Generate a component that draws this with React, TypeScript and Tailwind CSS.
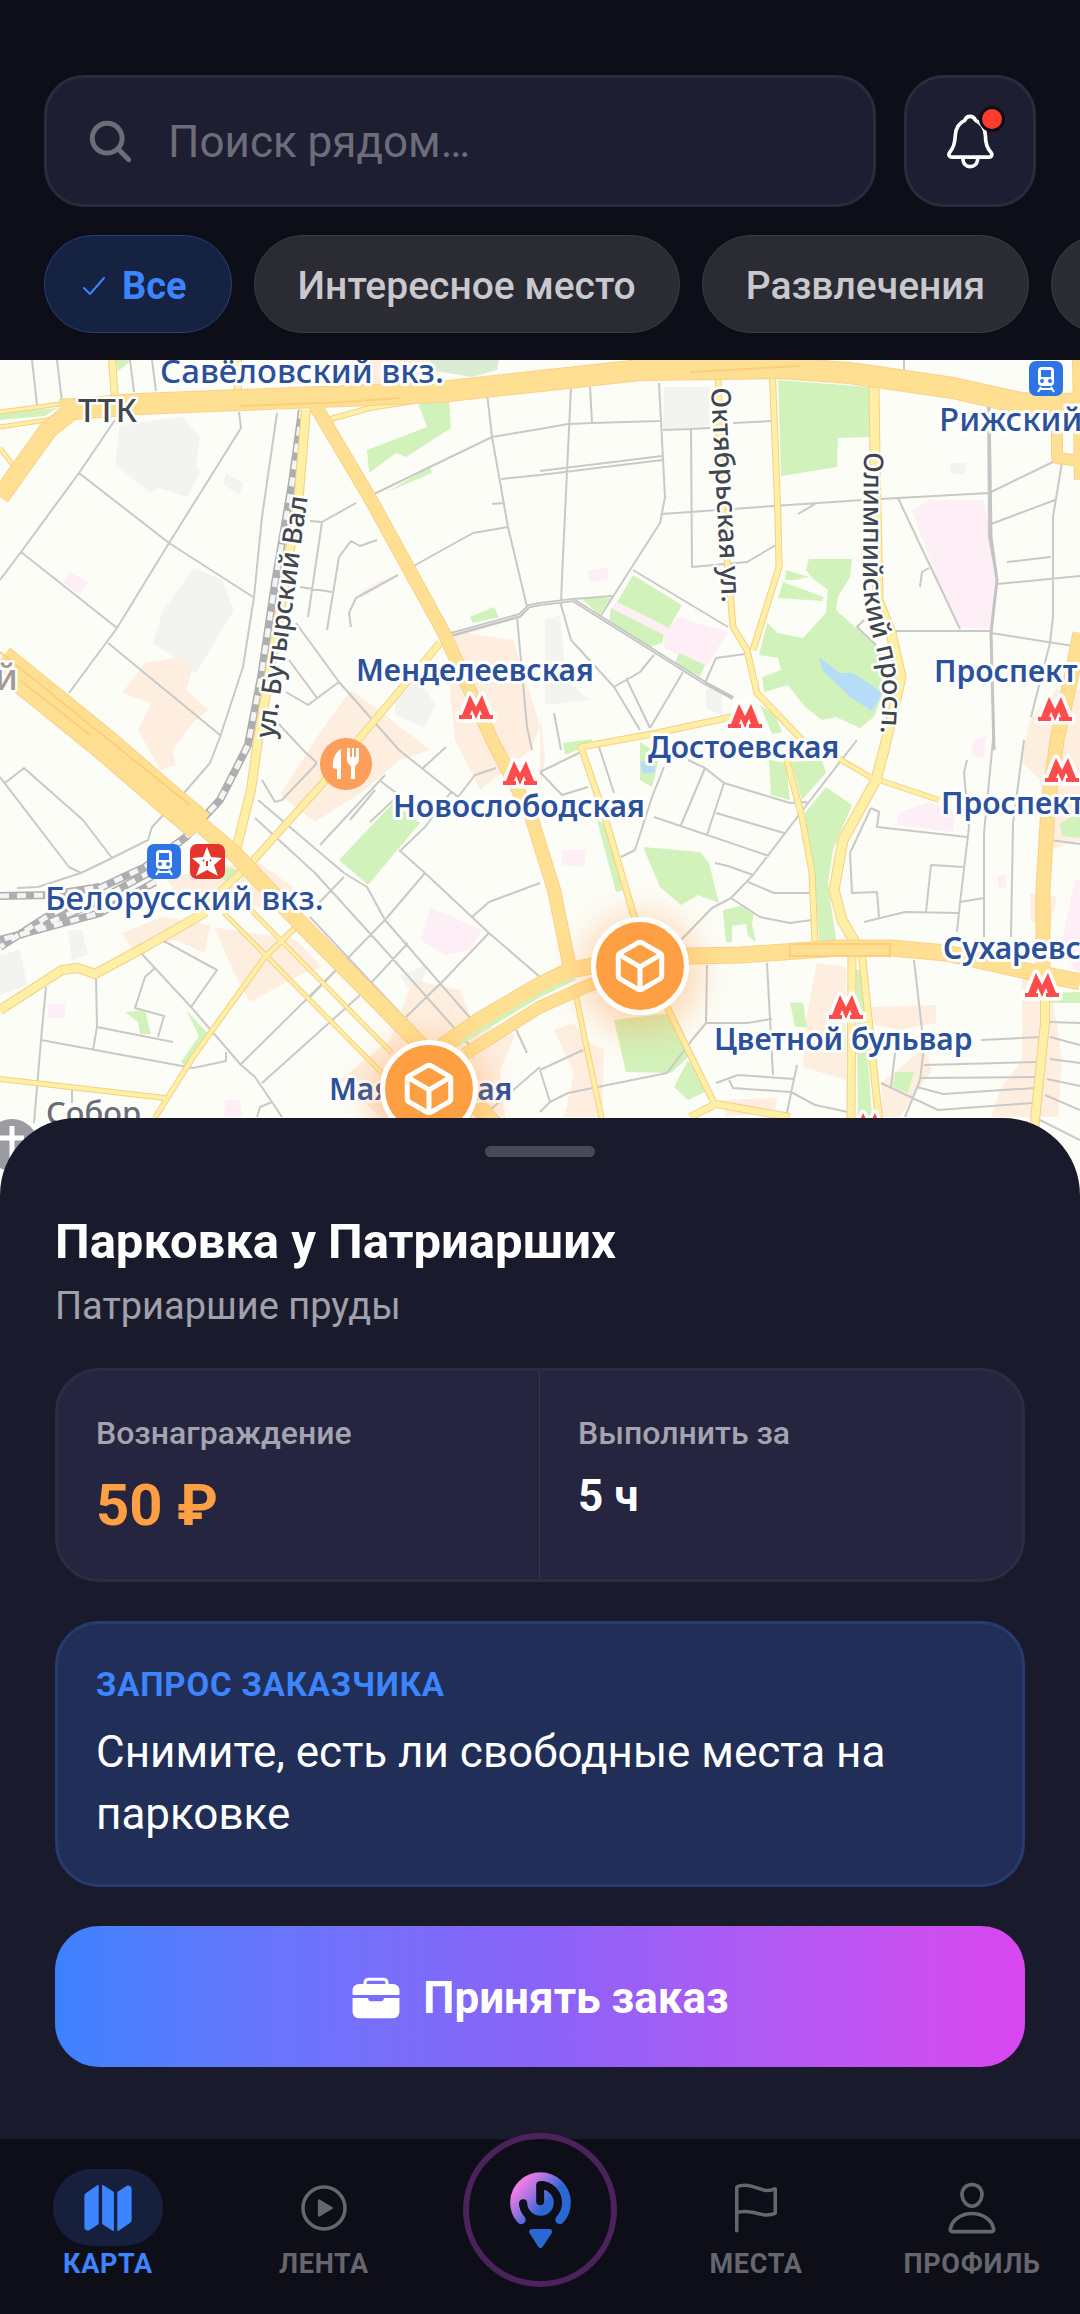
import {
  IoBriefcase,
  IoCheckmarkOutline,
  IoCubeOutline,
  IoFlagOutline,
  IoMap,
  IoPersonOutline,
  IoPlayCircleOutline,
  IoSearch,
} from "react-icons/io5";
import type { ReactNode } from "react";

const sideStreets = [
  "M32 360 37 405M57 360 62 402M130 360 134 392M152 360 156 391",
  "M115 420 79 473 21 552 0 580M79 473 169 543 253 597",
  "M239 412 241 428 169 543 117 628 69 693M21 552 117 628M108 643 220 735",
  "M277 413 262 517 254 597 243 667 220 737 210 763 184 793 152 827 148 840 112 858 81 873 38 887 17 888",
  "M487 393 492 437 508 527 527 607M540 429 492 437 372 495M356 503 322 522 308 617M310 521 322 522",
  "M377 540 360 546 351 541 339 557 327 630M300 587 332 592",
  "M508 527 473 533 410 568M398 575 356 598 349 613 351 627M540 475 501 479M492 504 503 503",
  "M448 637 520 617 529 607 540 605M517 617 527 727 532 750",
  "M296 623 339 682 399 750 458 797M339 682 308 705 286 692M289 660 317 698M277 722 303 750 317 763",
  "M571 387 562 577 561 605 571 640 614 687 640 730M540 429 568 424 592 423 660 421M590 387 592 423",
  "M659 383 665 497 662 513 660 523 600 617M540 471 662 456M540 475 662 460",
  "M663 430 691 429 710 428M733 423 774 421M691 429 692 567 747 562 776 545",
  "M662 514 774 506 863 500 898 498 989 493M798 514 815 504",
  "M988 400 989 537 997 580 991 633 994 750M989 493 1057 460M1062 462 1053 517 1053 617 1050 643 1031 717",
  "M991 524 1055 500M997 584 1080 576M1007 562 1051 557M991 633 1080 647M896 631 991 631M898 498 960 629M920 587 922 572 929 568",
  "M573 599 612 596M633 570 728 627M705 683 716 658 745 654M654 655 640 672 614 687M626 678 650 728M683 672 650 728",
  "M864 620 857 627 876 645M554 713 561 750M692 360 692 366M633 360 633 364M904 360 904 374",
  "M5 783 24 768 83 820 112 858M0 777 69 867 81 873M262 780 275 802 282 800 317 763",
  "M255 818 315 873 385 950 472 1048M258 800 344 873 367 887 385 920 472 1020",
  "M310 917 430 1045M379 780 399 795 370 822M399 850 425 873 489 933 540 977M446 747 423 768M458 797 475 775 496 768",
  "M385 775 320 845M451 792 425 827 401 850M375 790 350 820M425 873 385 920 310 997M344 877 310 912",
  "M489 933 444 980 406 1017M472 917 489 902 540 883M408 943 358 997M358 997 262 1083M336 970 241 1064",
  "M141 953 191 1007 241 1065 255 1077 282 1117M162 940 217 970 191 1007M155 968 145 977 135 1008 164 1016 158 1037",
  "M46 987 41 1040 34 1123M96 978 97 1027 93 1050M97 1027 173 1042M41 1040 193 1068 226 1061 226 1052",
  "M257 1117 260 1107 272 1102M72 1090 72 1103M513 1023 527 1053M540 1067 490 1110",
  "M540 772 581 752M540 772 562 795 588 787M599 747 614 793M664 767 652 797 635 850 621 857",
  "M654 817 769 856M688 760 705 768 724 783 790 803 807 802M705 768 681 825M724 783 707 835M716 813 784 833",
  "M857 740 805 807 753 875 731 898 712 908 681 940M715 863 728 866 753 875M748 882 774 893 810 893M731 898 760 917 790 923 812 920",
  "M871 808 879 812 877 827 967 837M871 808 850 853 852 893 877 892 879 917M864 922 905 912 958 913",
  "M967 760 964 773 969 827 960 903 957 932M926 912 931 865 964 867M960 902 984 898M993 740 984 833 984 937M1024 740 1013 823 1011 937",
  "M707 965 706 1023 692 1040 667 1073 568 1093 550 1102 540 1112M706 1023 747 1023 772 1019M767 963 773 1075",
  "M540 1070 583 1050M540 1070 550 1102M716 1083 738 1075 795 1079M729 1080 733 1088 791 1092 815 1105 848 1112M797 1065 786 1117",
  "M914 960 924 1047 920 1080 905 1117M895 1053 891 1087M881 1083 938 1110 1032 1103M924 1065 1038 1062M919 1078 1036 1077M917 1087 943 1094 1035 1088M981 1040 1041 1037",
  "M1050 1022 1080 1023M1050 1037 1080 1045M1050 1059 1080 1063M1047 1079 1080 1086M1045 1095 1080 1110M1040 1120 1080 1140M1050 840 1080 844",
].join("");

const parks = [
  "M367 450 427 427 418 403 449 400 451 428 406 457 396 453 369 473Z",
  "M387 492 430 467 432 473ZM470 617 494 607 499 617 473 623ZM0 412 58 408 45 416 0 420Z",
  "M115 360 132 360 118 371ZM778 380 869 387 869 437 838 438 837 467 781 476Z",
  "M809 559 852 559 850 577 838 597 836 610 881 650 883 693 874 717 860 728 836 717 822 720 805 707 788 685 764 692 762 677 781 670 778 658 759 655 767 623 778 633 803 638 826 613 828 590 812 578 806 570Z",
  "M783 582 824 597 822 601 778 598ZM786 570 809 577 795 580 785 580Z",
  "M633 575 682 605 669 628 617 602ZM611 608 664 635 662 643 650 647 609 622ZM581 598 612 598 599 615ZM679 653 705 665 700 676 674 665Z",
  "M393 803 420 823 368 885 339 860ZM224 867 239 870 229 883 220 878Z",
  "M563 743 592 739 592 744 565 755ZM760 705 775 715 782 732 772 734Z",
  "M643 847 700 852 709 863 719 903 698 895 681 905 660 887ZM597 820 605 824 623 890 616 892Z",
  "M640 742 660 755 652 787 640 780ZM769 760 786 763 790 800 771 795ZM791 762 822 760 826 773 802 800Z",
  "M826 787 852 805 833 850 828 883 836 940 819 942 815 883 805 813Z",
  "M723 910 740 906 754 912 752 925 756 942 748 936 746 924 732 926 732 942 726 942Z",
  "M614 1020 671 1013 688 1057 671 1073 626 1072ZM688 1060 709 1090 688 1100 674 1087Z",
  "M790 1002 803 1003 807 1027 795 1027ZM895 1072 914 1072 908 1093 893 1087Z",
  "M1060 823 1080 813 1080 838 1062 836ZM1050 993 1080 992 1080 1003 1050 1003ZM856 970 862 970 872 1117 858 1117Z",
  "M125 1012 145 1010 151 1034 140 1034 138 1022ZM186 1010 208 1034 185 1066 181 1062 199 1036Z",
].join("");

const quarters = [
  "M145 663 179 657 193 667 186 690 208 710 193 723 172 750 176 765 160 770 138 730 151 703 122 693Z",
  "M448 630 513 640 523 670 540 727 530 750 480 790 455 740 450 690Z",
  "M351 690 379 710 430 750 400 760 365 790 315 822 280 795 317 737Z",
  "M122 933 162 917 210 925 205 953 175 940 133 950ZM214 927 296 940 322 967 300 975 250 1002 235 975Z",
  "M255 860 293 887 290 910 240 905 165 892 205 870ZM165 878 200 872 210 900 175 890Z",
  "M413 980 460 990 472 1020 515 1035 500 1070 505 1117 380 1117 340 1080 390 1040Z",
  "M554 1030 574 1023 585 1040 604 1050 602 1117 564 1117 574 1073ZM817 963 846 967 846 1080 803 1067 806 1020Z",
  "M870 1007 936 1005 936 1023 900 1030 875 1025ZM881 1083 925 1047 932 1070 900 1117 882 1117Z",
  "M1022 973 1050 980 1062 1060 1058 1117 991 1117 1000 1090 1022 1060ZM1030 893 1057 897 1050 930 1030 920Z",
  "M1031 717 1057 690 1080 690 1080 840 1050 850 1040 780 1020 760ZM725 1100 777 1098 775 1112 725 1117Z",
  "M360 360 440 360 440 380 360 384ZM540 713 545 760 540 790Z",
].join("");

const hospitals = [
  "M912 510 929 500 984 500 991 537 996 583 991 629 958 627 936 577Z",
  "M678 617 728 632 706 667 664 648 664 635 611 608 617 602 669 628Z",
  "M70 572 88 583 80 594 62 582ZM588 570 608 568 609 578 590 583ZM386 443 398 441 394 447ZM362 590 385 578 380 586 362 598Z",
  "M898 813 929 802 955 813 953 832 897 825ZM1075 880 1080 880 1080 975 1060 950ZM562 850 586 850 584 867 562 865Z",
  "M421 940 430 908 455 918 482 930 470 950 445 955ZM48 1004 65 1004 65 1018 48 1018ZM225 1100 240 1100 242 1117 224 1117ZM998 875 1006 875 1006 888 998 888ZM973 742 986 735 984 758 972 755Z",
].join("");

const industrial = [
  "M120 425 182 417 200 437 196 467 200 473 188 497 158 488 151 493 115 465Z",
  "M194 568 222 580 234 610 196 673 153 643 163 610ZM226 473 243 483 240 495 223 485Z",
  "M664 387 710 387 709 428 663 429ZM0 955 20 950 27 985 0 995ZM68 930 82 930 88 955 72 960ZM545 620 560 615 566 680 590 700 545 705Z",
  "M395 700 420 680 435 705 425 728 395 715ZM400 975 428 965 415 1000ZM706 688 722 692 722 715 706 708ZM950 463 966 463 965 474 951 474Z",
].join("");

const wideRoads: [string, number][] = [
  ["M0 660 105 745 165 797 200 826", 30],
  ["M190 816 234 853 300 923 413 1037 500 1130", 15],
  ["M60 410 138 404 240 400 344 396 440 392 540 381 640 370 719 369 780 368 850 373 953 388 1020 403 1080 404", 20],
  ["M75 408 48 430 0 497", 17],
  ["M312 400 371 500 444 633 492 740 530 813 554 890 571 973", 12],
  ["M430 1055 480 1020 540 985 571 970 640 957 740 955 840 948 891 948 946 953 1022 970 1080 982", 15],
  ["M465 1054 540 1007 585 987 640 965", 11],
  ["M1080 633 1070 683 1057 740 1048 807 1043 890 1043 973", 13],
  ["M1057 400 1057 458 1080 461M1078 360 1080 480", 10],
];

const yellowRoads: [string, number][] = [
  ["M306 410 299 493 282 600 258 740 251 790 241 830 236 850", 8],
  ["M112 360 115 398M238 360 238 395", 6],
  ["M440 643 358 740 323 783 251 863 206 905", 6],
  ["M874 383 875 460 878 600 891 633 901 677 884 750 876 780 843 840 834 890 842 920 857 946", 9],
  ["M772 364 778 517 779 567 753 650", 5],
  ["M718 364 720 480 731 603 733 627 747 650 757 693 802 740", 5],
  ["M836 757 870 777 939 800", 4],
  ["M786 757 802 817 812 873 815 946", 5],
  ["M736 716 657 733 581 747 605 817 633 913 667 1007 716 1107", 5],
  ["M690 1117 716 1104 790 1117", 6],
  ["M574 985 585 1040 602 1120", 4],
  ["M852 955 851 1120", 7],
  ["M862 955 879 1120", 6],
  ["M0 1010 62 970 78 968 95 974 145 947 206 912", 8],
  ["M0 1079 165 1098M155 1118 193 1057 265 957 296 927", 4],
  ["M224 913 382 1073M251 910 392 1053", 3],
  ["M1045 980 1045 1023 1034 1130", 8],
  ["M0 412 60 404M0 427 60 418M0 448 15 468", 3],
  ["M320 422 370 408 420 400M306 425 300 490", 4],
];

const railway =
  "M302 410 292 483 275 583 261 677 248 745 237 767 220 800 186 837 145 867 100 888 45 918 0 947M150 872 90 905 20 935M0 896 50 895 100 887M155 882 100 913 0 940";

const metroStations: [number, number][] = [
  [476, 707],
  [520, 773],
  [745, 716],
  [1055, 709],
  [1062, 770],
  [1042, 985],
  [846, 1007],
  [869, 1125],
];

const placeLabels: { text: string; x: number; y: number; metro?: boolean }[] = [
  { text: "Савёловский вкз.", x: 160, y: 383 },
  { text: "Белорусский вкз.", x: 45, y: 910 },
  { text: "Рижский", x: 939, y: 431 },
  { text: "Менделеевская", x: 356, y: 681, metro: true },
  { text: "Новослободская", x: 393, y: 817, metro: true },
  { text: "Достоевская", x: 648, y: 758, metro: true },
  { text: "Проспект", x: 934, y: 682, metro: true },
  { text: "Проспект", x: 941, y: 814, metro: true },
  { text: "Сухаревская", x: 943, y: 959, metro: true },
  { text: "Цветной бульвар", x: 714, y: 1050, metro: true },
  { text: "Маяковская", x: 329, y: 1100, metro: true },
];

function Train({ x, y }: { x: number; y: number }) {
  return (
    <g transform={`translate(${x} ${y})`}>
      <rect width="34" height="35" rx="7" fill="#2f74e4" />
      <rect x="9" y="6" width="16" height="19" rx="4" fill="#fff" />
      <path d="M12 9h10v7h-10z" fill="#2f74e4" />
      <circle cx="13" cy="20" r="2" fill="#2f74e4" />
      <circle cx="21" cy="20" r="2" fill="#2f74e4" />
      <path d="M12 26 9 31M22 26 25 31M11 28H23" stroke="#fff" strokeWidth="2" />
    </g>
  );
}

function CityMap() {
  return (
    <svg
      className="absolute inset-0 h-full w-full font-['Noto_Sans',sans-serif]"
      viewBox="0 360 1080 838"
      preserveAspectRatio="xMidYMin slice"
      role="img"
      aria-label="Карта Москвы"
    >
      <rect y="360" width="1080" height="840" fill="#fcfdf7" />
      <path d={industrial} fill="#f3f4f1" />
      <path d={quarters} fill="#feeee0" />
      <path d={hospitals} fill="#feeef5" />
      <path d="M430 360 499 360 497 370 472 377 430 370Z" fill="#dcecd2" />
      <path d={parks} fill="#d2f2bb" />
      <path d="M819 657 840 673 853 673 883 693 872 711 850 697 822 670ZM640 762 654 760 655 772 643 774Z" fill="#b7dcf8" />
      <path d={sideStreets} fill="none" stroke="#c9c9c8" strokeWidth="2" strokeLinejoin="round" />
      <path
        d="M448 635 520 615 529 606 540 604 573 600 705 683 733 698"
        fill="none"
        stroke="#c4c4c4"
        strokeWidth="4"
      />
      <path d="M989 400 991 537 997 580 991 633 994 750" fill="none" stroke="#c4c4c4" strokeWidth="3" />
      <path
        d="M448 635 520 615 529 606 540 604 573 600 705 683"
        fill="none"
        stroke="#e6e6e4"
        strokeWidth="1"
      />
      <path d={railway} fill="none" stroke="#adaeb0" strokeWidth="8" />
      <path d={railway} fill="none" stroke="#f4f4f2" strokeWidth="5" strokeDasharray="9 8" />
      <g fill="none" stroke="#f6cf86" strokeLinejoin="round">
        {yellowRoads.map(([d, w]) => (
          <path key={d} d={d} strokeWidth={w + 2} />
        ))}
      </g>
      <g fill="none" stroke="#fff0a6" strokeLinejoin="round">
        {yellowRoads.map(([d, w]) => (
          <path key={d} d={d} strokeWidth={w} />
        ))}
      </g>
      <g fill="none" stroke="#fbd08a" strokeLinejoin="round">
        {wideRoads.map(([d, w]) => (
          <path key={d} d={d} strokeWidth={w + 2} />
        ))}
      </g>
      <g fill="none" stroke="#ffe093" strokeLinejoin="round">
        {wideRoads.map(([d, w]) => (
          <path key={d} d={d} strokeWidth={w} />
        ))}
      </g>
      <path
        d="M0 652 100 733 190 805M240 406 344 402 400 398M690 372 800 366M790 944H890V956H790ZM20 680 90 735"
        fill="none"
        stroke="#fbcf7c"
        strokeWidth="2"
      />
      <path d="M460 1043 540 995 575 978" fill="none" stroke="#d2f2bb" strokeWidth="4" />

      <g stroke="#fff" strokeWidth="7" strokeLinejoin="round" paintOrder="stroke" fill="#fe4b4b">
        {metroStations.map(([x, y]) => (
          <path
            key={`${x}-${y}`}
            transform={`translate(${x} ${y})`}
            d="M-6-12 0 0 6-12 14 8H17V12H4V8H6L4 3 0 12-4 3-6 8H-4V12H-17V8H-14Z"
          />
        ))}
      </g>
      <Train x={147} y={844} />
      <Train x={1029} y={361} />
      <rect x="190" y="844" width="35" height="35" rx="7" fill="#e4342b" />
      <path
        d="M207 847 211 857 222 858 214 865 218 876 207 870 196 876 200 865 192 858 203 857Z"
        fill="#fff"
      />
      <path d="M207 861V866M203 860 204 861M211 860 210 861" stroke="#e4342b" strokeWidth="2" />

      <circle cx="346" cy="764" r="26" fill="#fd9f5a" />
      <path
        d="M341 749C335 752 332 761 333 768L337 769V779H341ZM347 748V759C347 764 351 766 351 766V779H355V766C355 766 359 764 359 759V748Z"
        fill="#fff"
      />
      <path d="M351 748V757M355 748V757" stroke="#fd9f5a" strokeWidth="2" />

      <circle cx="12" cy="1145" r="26" fill="#9b9ca2" />
      <path d="M12 1126V1170M0 1138H24" stroke="#fff" strokeWidth="5" />

      <g fill="#2c519b" stroke="#fff" strokeWidth="6" strokeLinejoin="round" paintOrder="stroke">
        {placeLabels.map(({ text, x, y, metro }) => (
          <text key={`${text}-${y}`} x={x} y={y} fontWeight={metro ? 600 : 500} fontSize={metro ? 30 : 33}>
            {text}
          </text>
        ))}
      </g>
      <g
        fill="#42464d"
        stroke="#fff"
        strokeWidth="5"
        strokeLinejoin="round"
        paintOrder="stroke"
        fontSize="27"
        fontWeight="500"
      >
        <text x="78" y="422" fontSize="33">
          ТТК
        </text>
        <text x="46" y="1124" fontSize="31" fill="#6a6d73">
          Собор
        </text>
        <text x="-5" y="690" fontSize="36" fill="#a39a94">
          й
        </text>
        <path id="butyrsky" d="M274 739 310 480" fill="none" stroke="none" />
        <text>
          <textPath href="#butyrsky">ул. Бутырский Вал</textPath>
        </text>
        <path id="oktyabrskaya" d="M711 388 724 640" fill="none" stroke="none" />
        <text>
          <textPath href="#oktyabrskaya">Октябрьская ул.</textPath>
        </text>
        <path
          id="olympic"
          d="M864 452 863 575C863 600 868 622 874 640C882 668 886 690 878 760"
          fill="none"
          stroke="none"
        />
        <text>
          <textPath href="#olympic">Олимпийский просп.</textPath>
        </text>
      </g>
    </svg>
  );
}

function OrderPin({ className, label }: { className: string; label: string }) {
  return (
    <button
      type="button"
      aria-label={label}
      className={`absolute flex size-[98px] -translate-x-1/2 -translate-y-1/2 items-center justify-center rounded-full border-[5px] border-white bg-[#ff9f43] text-white shadow-[0_8px_36px_8px_rgba(255,150,60,0.4)] ${className}`}
    >
      <IoCubeOutline size={58} className="[&_path]:stroke-[44px]" />
    </button>
  );
}

function BellIcon() {
  return (
    <svg
      viewBox="195 152 148 176"
      className="h-[59px] w-[49px]"
      fill="none"
      stroke="currentColor"
      strokeWidth="11"
      strokeLinejoin="round"
      aria-hidden="true"
    >
      <path d="M268 164C258 164 254 169 252 176C234 184 224 199 223 222C222 250 216 262 206 273C201 280 205 287 212 287H326C333 287 336 280 331 273C320 262 314 250 314 222C313 199 302 184 284 176C281 169 277 164 268 164Z" />
      <path d="M246 289C246 308 256 316 268 316S291 308 291 289" />
    </svg>
  );
}

function Chip({ children }: { children: ReactNode }) {
  return (
    <button
      type="button"
      className="flex h-[98px] shrink-0 items-center rounded-full border border-[#3b3b45] bg-[#2b2b34] px-[43px] pt-1 text-[39px] font-medium text-[#c9c9cd]"
    >
      {children}
    </button>
  );
}

function Tab({ icon, label, active = false }: { icon: ReactNode; label: string; active?: boolean }) {
  return (
    <a
      href="#"
      aria-current={active ? "page" : undefined}
      className={`flex flex-col items-center gap-0.5 ${active ? "text-[#3d84ff]" : "text-[#66666f]"}`}
    >
      <span
        className={`flex h-[77px] w-[110px] items-center justify-center rounded-full ${active ? "bg-[#16203d]" : ""}`}
      >
        {icon}
      </span>
      <span className="text-[27px] leading-[32px] font-bold tracking-wide">{label}</span>
    </a>
  );
}

function Logo() {
  return (
    <svg viewBox="200 150 202 245" className="h-[82px] w-[67px]" aria-hidden="true">
      <defs>
        <linearGradient id="logo" gradientUnits="userSpaceOnUse" x1="248" y1="186" x2="322" y2="250">
          <stop offset="0" stopColor="#f07be4" />
          <stop offset="0.500" stopColor="#9a72e0" />
          <stop offset="1" stopColor="#2a68d4" />
        </linearGradient>
      </defs>
      <path d="M243 302A78 78 0 1 1 359 302" fill="none" stroke="url(#logo)" strokeWidth="27" strokeLinecap="round" />
      <path d="M301 250H230A71 71 0 0 1 301 179Z" fill="url(#logo)" />
      <circle cx="301" cy="250" r="44" fill="url(#logo)" />
      <path d="M300 246V198A52 52 0 1 1 249 252" fill="none" stroke="#0e0e18" strokeWidth="24" strokeLinecap="round" strokeLinejoin="round" />
      <path d="M275 338H328L301 379Z" fill="#2a68d4" stroke="#2a68d4" strokeWidth="16" strokeLinejoin="round" />
    </svg>
  );
}

export default function App() {
  return (
    <div className="flex min-h-screen flex-col overflow-hidden bg-[#0e0e18] font-[Roboto,sans-serif] text-white">
      <header className="flex flex-col gap-7 pt-[75px] pb-[27px]">
        <div className="flex gap-7 px-11">
          <label className="flex h-[132px] min-w-0 flex-1 items-center gap-8 rounded-[40px] border-[3px] border-[#2c2b3c] bg-[#1e1e32] pr-8 pl-[38px]">
            <IoSearch size={51} className="shrink-0 text-[#6d6d79]" />
            <input
              type="text"
              aria-label="Поиск рядом"
              placeholder="Поиск рядом…"
              className="w-full min-w-0 bg-transparent pt-0.5 text-[44px] outline-none placeholder:text-[#6d6d79]"
            />
          </label>
          <button
            type="button"
            aria-label="Уведомления"
            className="relative flex size-[132px] shrink-0 items-center justify-center rounded-[40px] border-[3px] border-[#2c2b3c] bg-[#1e1e32]"
          >
            <BellIcon />
            <span className="absolute top-7 right-7 size-[26px] rounded-full border-[3px] border-[#0e0e18] bg-[#ff3b30]" />
          </button>
        </div>
        <div className="flex gap-[22px] overflow-hidden pl-11">
          <button
            type="button"
            aria-pressed="true"
            className="flex h-[98px] shrink-0 items-center gap-3 rounded-full border border-[#24407c] bg-[#152241] pt-1 pr-11 pl-[33px] text-[38px] font-bold text-[#3d84ff]"
          >
            <IoCheckmarkOutline size={32} />
            Все
          </button>
          <Chip>Интересное место</Chip>
          <Chip>Развлечения</Chip>
          <button
            type="button"
            aria-label="Ещё категории"
            className="h-[98px] w-52 shrink-0 rounded-full border border-[#3b3b45] bg-[#2b2b34]"
          />
        </div>
      </header>

      <section className="relative -mb-20 min-h-[600px] flex-1 overflow-hidden">
        <CityMap />
        <OrderPin label="Заказ: Маяковская" className="top-[729px] left-[39.7%]" />
        <OrderPin label="Заказ: Садовое кольцо" className="top-[606px] left-[59.3%]" />
      </section>

      <section className="relative rounded-t-[77px] bg-[#1a1a2d] px-[55px] pt-7 pb-[72px]">
        <div className="mx-auto h-[11px] w-[110px] rounded-full bg-[#4a4958]" />
        <h1 className="mt-[55px] text-[49px] leading-[60px] font-bold">Парковка у Патриарших</h1>
        <p className="mt-[10px] text-[38px] leading-[48px] text-[#a1a1ab]">Патриаршие пруды</p>

        <dl className="mt-[38px] grid grid-cols-2 rounded-[44px] border-[3px] border-[#2d2c41] bg-[#26253f] text-white">
          <div className="border-r border-[#35344b] px-[38px] pt-[42px] pb-[39px]">
            <dt className="text-[32px] leading-[40px] font-medium text-[#a4a4b0]">Вознаграждение</dt>
            <dd className="mt-[17px] text-[58px] leading-[70px] font-bold text-[#ff9f43]">50 ₽</dd>
          </div>
          <div className="px-[38px] pt-[42px] pb-[39px]">
            <dt className="text-[32px] leading-[40px] font-medium text-[#a4a4b0]">Выполнить за</dt>
            <dd className="mt-[17px] text-[44px] leading-[52px] font-bold">5 ч</dd>
          </div>
        </dl>

        <div className="mt-[39px] rounded-[44px] border-[3px] border-[#273b70] bg-[#212e57] px-[38px] pt-[41px] pb-[39px]">
          <h2 className="text-[33px] leading-[40px] font-bold tracking-wide text-[#3d84ff]">ЗАПРОС ЗАКАЗЧИКА</h2>
          <p className="mt-4 text-[44px] leading-[62px]">Снимите, есть ли свободные места на парковке</p>
        </div>

        <button
          type="button"
          className="mt-[39px] flex h-[141px] w-full items-center justify-center gap-[22px] rounded-[44px] bg-linear-to-r from-[#3b82ff] via-[#8a63f8] to-[#d946ef] pt-0.5 text-[44px] font-bold"
        >
          <IoBriefcase size={50} />
          Принять заказ
        </button>
      </section>

      <nav className="relative grid h-[175px] grid-cols-5 bg-[#0e0e18] pt-[30px]">
        <Tab active label="КАРТА" icon={<IoMap size={54} />} />
        <Tab label="ЛЕНТА" icon={<IoPlayCircleOutline size={56} />} />
        <a
          href="#"
          aria-label="Создать заказ"
          className="-mt-9 flex size-[154px] items-center justify-center justify-self-center rounded-full border-[6px] border-[#4c225c] bg-[#0e0e18]"
        >
          <Logo />
        </a>
        <Tab label="МЕСТА" icon={<IoFlagOutline size={56} />} />
        <Tab label="ПРОФИЛЬ" icon={<IoPersonOutline size={58} />} />
      </nav>
    </div>
  );
}
